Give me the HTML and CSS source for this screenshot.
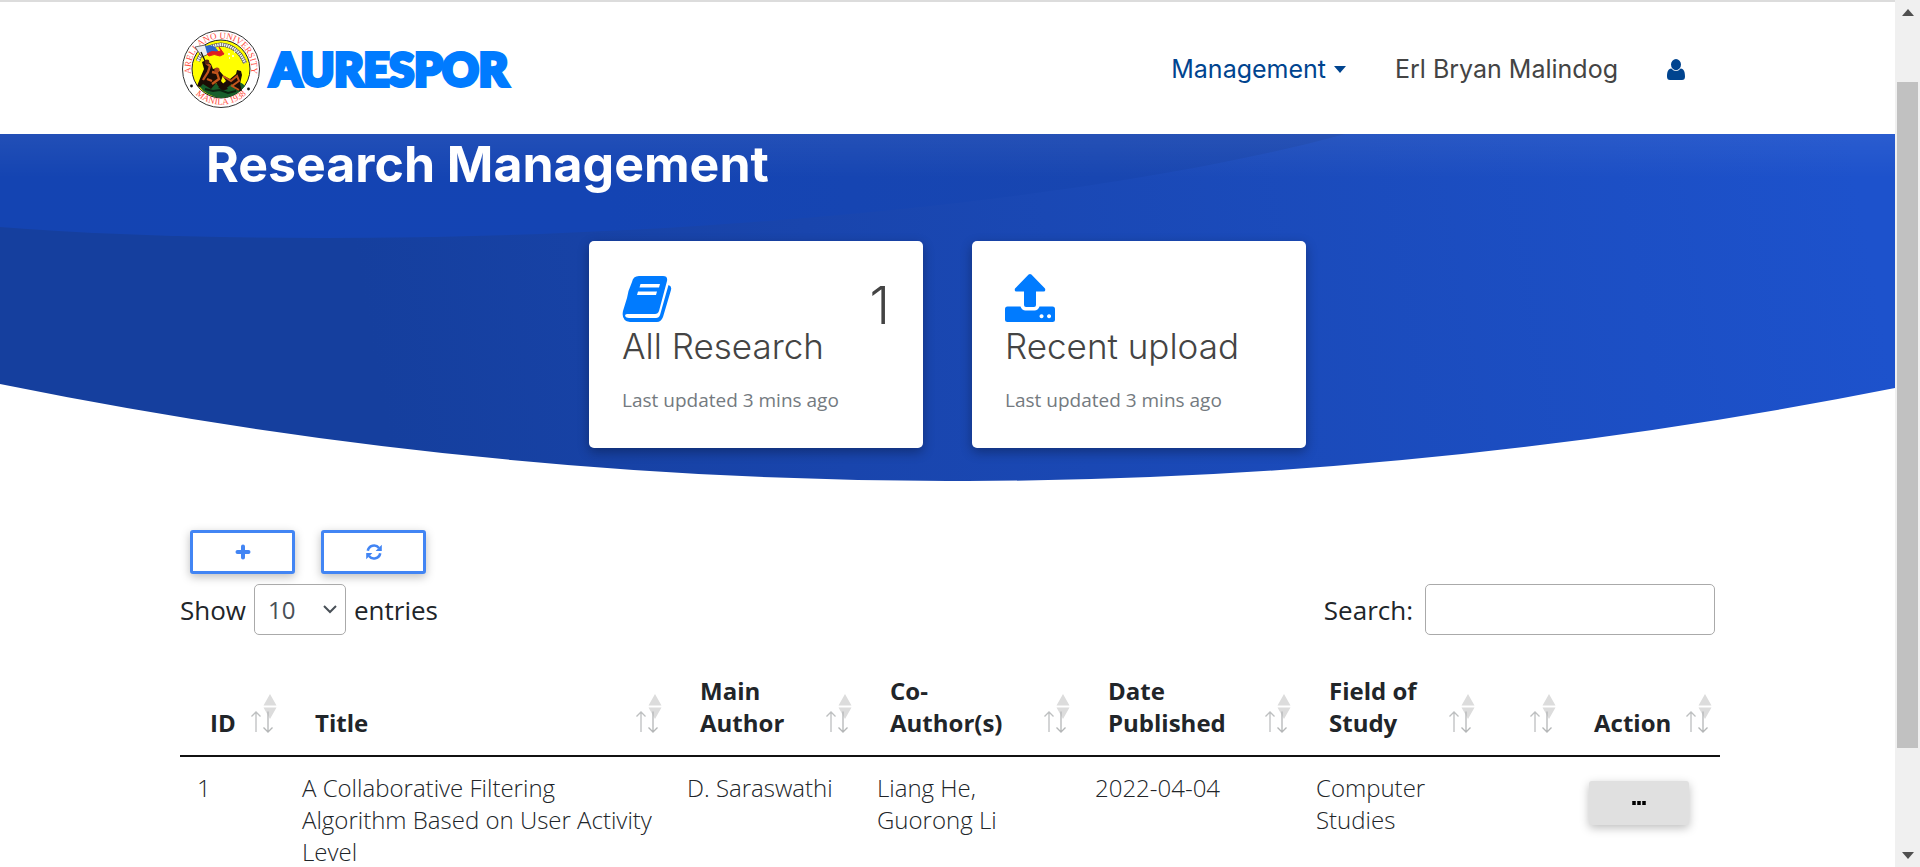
FILE: index.html
```html
<!DOCTYPE html>
<html lang="en">
<head>
<meta charset="utf-8">
<meta name="viewport" content="width=device-width, initial-scale=1">
<title>AURESPOR - Research Management</title>
<link rel="stylesheet" href="styles.css">
</head>
<body>
<svg class="defs" aria-hidden="true">
  <symbol id="sort" viewBox="0 0 34 40">
    <path d="M20.500 11.500L27 0l6.500 11.500z M20.500 13.500h13L27 25z" fill="#dcdcdc"/>
    <path d="M13 38V18M8.500 22.500L13 18l4.500 4.500" fill="none" stroke="#bdbfc0" stroke-width="1.300"/>
    <path d="M25 17.500v20M20.500 33.500L25 38l4.500-4.500" fill="none" stroke="#b4b6b7" stroke-width="1.300"/>
  </symbol>
</svg>
<div class="screen">
  <div class="page">
    <header class="topbar">
      <div class="container topbar-row">
        <a class="brand" href="#">
          <svg class="seal" viewBox="0 0 80 80" role="img" aria-label="Arellano University seal">
            <defs>
              <path id="ringTop" d="M11.500 50.500A30.400 30.400 0 1 1 68.500 50.500"/>
              <path id="ringBottom" d="M7 54A36 36 0 0 0 73 54"/>
            </defs>
            <circle cx="40" cy="40" r="38.500" fill="#fff" stroke="#333" stroke-width="1"/>
            <circle cx="40" cy="40" r="29" fill="#ffff00" stroke="#222" stroke-width="1"/>
            <text class="seal-name"><textPath href="#ringTop" startOffset="50%" text-anchor="middle">ARELLANO UNIVERSITY</textPath></text>
            <text class="seal-name"><textPath href="#ringBottom" startOffset="50%" text-anchor="middle">MANILA 1938</textPath></text>
            <circle cx="10.500" cy="57" r="1.400" fill="#111"/><circle cx="67.500" cy="60" r="1.400" fill="#111"/>
            <path d="M17 32Q22 17 40 15.500Q57 17 64 34" fill="none" stroke="#444" stroke-width="4"/>
            <path d="M17 32Q22 17 40 15.500Q57 17 64 34" fill="none" stroke="#eee" stroke-width="3" stroke-dasharray="1.600 .6"/>
            <path d="M18 57Q28 50 36 55T51 55T64 57Q56 68 40 69Q25 67 18 57Z" fill="#175f2b"/>
            <path d="M14 18l10-2 6 8-9 4z" fill="#e8edf2" stroke="#333" stroke-width=".7"/>
            <path d="M24 17q6-2 10 1l5 6h-13z" fill="#2b63c9"/>
            <path d="M26 25q5-4 9-2l5-1-2-4 5 7-4 2q-6-3-11 0z" fill="#e11e1e" stroke="#e11e1e"/>
            <path d="M20 23l10 22" stroke="#111" stroke-width="1.300"/>
            <path d="M21 33l4-2 5 4 2 5 4-1 6 7-2 6 7 8-6 2-6-8-5 6-8-5-3 3-3-1 4-10 3-7z" fill="#1b0d05"/>
            <path d="M25 34l4 3-2 6-5 8m9-8 5 1 2 6-7 5m-5-5 5 2" fill="none" stroke="#c2561c" stroke-width="2.300"/>
            <circle cx="26" cy="33" r="2.400" fill="#5b2410"/><circle cx="36" cy="41" r="2.600" fill="#a8441a"/>
            <path d="M41 46l8 4 6-5 1-4 4 1 1 4-2 9 2 7-6-1-4-6-7 5-7-1 8-7z" fill="#1b0d05"/>
            <path d="M42 47l8 5 6-5 2 5-7 5 7 4" fill="none" stroke="#c2561c" stroke-width="2"/>
            <path d="M24 60l8 2 7-1 8 3 8-2" fill="none" stroke="#0b2411" stroke-width="2"/>
            <path d="M47 25h2M51 27h2M48 29h1M53 23h1" stroke="#fff" stroke-width="1.600"/>
          </svg>
          <span class="wordmark">AURESPOR</span>
        </a>
        <nav class="nav">
          <a class="nav-link" href="#">Management<span class="caret"></span></a>
          <span class="nav-user">Erl Bryan Malindog</span>
          <a class="nav-link" href="#" aria-label="Account">
            <svg class="user-icon" viewBox="0 0 18 21"><path d="M9 0a5 5.600 0 0 1 0 11.200A5 5.600 0 0 1 9 0zM4.300 9.500Q9 14.500 13.700 9.500C17 10 18 13 18 17.500Q18 21 15 21H3Q0 21 0 17.500C0 13 1 10 4.300 9.500z" fill="#00448f"/></svg>
          </a>
        </nav>
      </div>
    </header>

    <section class="hero">
      <svg class="hero-bg" viewBox="0 0 1895 347" preserveAspectRatio="none" aria-hidden="true">
        <defs>
          <linearGradient id="outer" gradientUnits="userSpaceOnUse" x1="380" y1="260" x2="1850" y2="0">
            <stop offset="0" stop-color="#153f9e"/><stop offset=".3" stop-color="#1945ad"/><stop offset="1" stop-color="#1d52cc"/>
          </linearGradient>
          <linearGradient id="inner" x1="0" y1="0" x2="1" y2="0">
            <stop offset="0" stop-color="#1444b2"/><stop offset=".45" stop-color="#1444b3"/><stop offset="1" stop-color="#1a47b0"/>
          </linearGradient>
          <linearGradient id="sheen" x1="0" y1="0" x2="0" y2="1">
            <stop offset="0" stop-color="#fff" stop-opacity=".06"/><stop offset="1" stop-color="#fff" stop-opacity="0"/>
          </linearGradient>
        </defs>
        <path d="M0 0H1895V254Q947 442 0 250Z" fill="url(#outer)"/>
        <path d="M0 0H1345C1120 62 720 104 324 104Q140 104 0 93Z" fill="url(#inner)"/>
        <rect width="1895" height="44" fill="url(#sheen)"/>
      </svg>
      <div class="container hero-content">
        <h1 class="title">Research Management</h1>
        <div class="cards">
          <article class="card">
            <div class="card-top">
              <svg class="card-icon" viewBox="0 0 50 48"><path d="M17 2H41Q46 2 45 7L37 37Q36 40 33 40H5Q3 40 3 42Q4 44 7 44H34Q37 44 38 41L46.500 11Q50 12 49 16L41 43Q39 48 35 48H8Q-1 47 1 37L5 24L6.500 17L10 8Q11 2 17 2ZM18.500 10L17.500 13.500H37L38 10ZM16 17.500L15 21H34L35 17.500Z" fill="#007bff" fill-rule="evenodd"/></svg>
              <span class="count">1</span>
            </div>
            <h2 class="card-title">All Research</h2>
            <p class="card-note">Last updated 3 mins ago</p>
          </article>
          <article class="card">
            <div class="card-top">
              <svg class="card-icon" viewBox="0 0 50 48"><path d="M23.600.6Q25 -.5 26.400.6L40 14.500Q41 17.500 38.500 17.500H31V31Q31 33 29 33H21Q19 33 19 31V17.500H11.500Q9 17.500 10 14.500ZM2.500 32.500H15.500Q17 36.500 20.500 36.500H29.500Q33 36.500 34.500 32.500H47.500Q50 32.500 50 35V45.500Q50 48 47.500 48H2.500Q0 48 0 45.500V35Q0 32.500 2.500 32.500ZM36.500 40.200a2 2 0 1 0 .1 0ZM44 40.200a2 2 0 1 0 .1 0Z" fill="#007bff" fill-rule="evenodd"/></svg>
            </div>
            <h2 class="card-title">Recent upload</h2>
            <p class="card-note">Last updated 3 mins ago</p>
          </article>
        </div>
      </div>
    </section>

    <main class="container main">
      <div class="actions">
        <button class="btn-outline" type="button" aria-label="Add">
          <svg class="btn-icon" viewBox="0 0 16 16"><path d="M8 2.500v11M2.500 8h11" stroke="#4285f4" stroke-width="4" stroke-linecap="round"/></svg>
        </button>
        <button class="btn-outline" type="button" aria-label="Refresh">
          <svg class="btn-icon" viewBox="0 0 16 16"><path d="M1.800 6.800A6.300 6.300 0 0 1 13 4M14.200 9.200A6.300 6.300 0 0 1 3 12" fill="none" stroke="#4285f4" stroke-width="2.600"/><path d="M15.800.8V7H9.600ZM.2 15.200V9H6.400Z" fill="#4285f4"/></svg>
        </button>
      </div>
      <div class="controls">
        <label class="control">Show
          <select class="length"><option>10</option><option>25</option><option>50</option><option>100</option></select>
          entries</label>
        <label class="control search">Search:<input class="search-input" type="search"></label>
      </div>
      <table class="table">
        <colgroup><col class="c-id"><col class="c-title"><col class="c-main"><col class="c-co"><col class="c-date"><col class="c-field"><col class="c-blank"><col class="c-action"></colgroup>
        <thead>
          <tr>
            <th><div class="head"><span>ID</span><svg class="sort"><use href="#sort"/></svg></div></th>
            <th><div class="head"><span>Title</span><svg class="sort"><use href="#sort"/></svg></div></th>
            <th><div class="head"><span>Main<br>Author</span><svg class="sort"><use href="#sort"/></svg></div></th>
            <th><div class="head"><span>Co-<br>Author(s)</span><svg class="sort"><use href="#sort"/></svg></div></th>
            <th><div class="head"><span>Date<br>Published</span><svg class="sort"><use href="#sort"/></svg></div></th>
            <th><div class="head"><span>Field of<br>Study</span><svg class="sort"><use href="#sort"/></svg></div></th>
            <th><div class="head"><span></span><svg class="sort"><use href="#sort"/></svg></div></th>
            <th><div class="head"><span>Action</span><svg class="sort"><use href="#sort"/></svg></div></th>
          </tr>
        </thead>
        <tbody>
          <tr>
            <td>1</td>
            <td>A Collaborative Filtering Algorithm Based on User Activity Level</td>
            <td>D. Saraswathi</td>
            <td>Liang He, Guorong Li</td>
            <td>2022-04-04</td>
            <td>Computer Studies</td>
            <td></td>
            <td class="cell-action"><button class="btn-more" type="button" aria-label="More actions"><svg class="dots" viewBox="0 0 14 4"><path d="M.5 0h3v4h-3zM5.500 0h3v4h-3zM10.500 0h3v4h-3z" stroke="#000" stroke-width=".5"/></svg></button></td>
          </tr>
        </tbody>
      </table>
    </main>
  </div>
  <div class="scrollbar" aria-hidden="true">
    <span class="arrow arrow-up"></span>
    <span class="track"><span class="thumb"></span></span>
    <span class="arrow arrow-down"></span>
  </div>
</div>
</body>
</html>
```
FILE: styles.css
```css
* { box-sizing: border-box; }

body {
  margin: 0;
  background: #fff;
  color: #212529;
  font-family: "Open Sans", "Noto Sans", sans-serif;
}

.defs { position: absolute; width: 0; height: 0; }

.screen {
  display: grid;
  grid-template-columns: minmax(0, 1fr) 25px;
  height: 100vh;
  overflow: hidden;
}

.page { overflow: hidden; border-top: 2px solid #dcdcdc; }

.container {
  width: 100%;
  max-width: 1545px;
  margin: 0 auto;
  padding-left: 5px;
}

/* Top bar */
.topbar-row {
  display: flex;
  align-items: center;
  justify-content: space-between;
  height: 132px;
  padding-top: 2px;
}

.brand {
  display: flex;
  align-items: center;
  gap: 9px;
  padding-left: 1px;
  color: #007bff;
  text-decoration: none;
}

.seal { width: 80px; height: 80px; }

.seal-name {
  font-family: "Liberation Serif", serif;
  font-size: 9px;
  fill: #ff4a3d;
}

.wordmark {
  font-family: Lato, sans-serif;
  font-size: 45px;
  font-weight: 900;
  line-height: 60px;
  -webkit-text-stroke: 4px #007bff;
}

.nav {
  display: flex;
  align-items: center;
  gap: 49px;
  padding-right: 35px;
  font-family: Inter, sans-serif;
  font-size: 25px;
  line-height: 32px;
}

.nav-link { display: flex; align-items: center; color: #00448f; text-decoration: none; }
.nav-user { color: #444; }

.caret {
  margin-left: 8px;
  border: 6px solid transparent;
  border-top: 7px solid #00448f;
  border-bottom: 0;
}

.user-icon { width: 18px; height: 21px; }

/* Hero */
.hero { position: relative; }

.hero-bg { position: absolute; inset: 0; width: 100%; height: 100%; }

.hero-content { position: relative; padding-bottom: 33px; }

.title {
  margin: 0;
  padding: 0 26px;
  color: #fff;
  font-family: Inter, sans-serif;
  font-size: 50px;
  font-weight: 700;
  line-height: 60px;
}

.cards {
  display: flex;
  justify-content: center;
  gap: 49px;
  margin-top: 47px;
  padding-right: 5px;
}

.card {
  width: 334px;
  padding: 33px;
  border-radius: 5px;
  background: #fff;
  box-shadow: 0 4px 12px rgba(0, 0, 0, .32);
}

.card-top { display: flex; justify-content: space-between; align-items: flex-start; height: 48px; }
.card-icon { width: 50px; height: 48px; }

.count {
  color: #444;
  font-family: Inter, sans-serif;
  font-size: 52px;
  font-weight: 300;
  line-height: 64px;
}

.card-title {
  margin: 0;
  color: #444;
  font-family: Inter, sans-serif;
  font-size: 35px;
  font-weight: 300;
  line-height: 48px;
}

.card-note {
  margin: 16px 0 1px;
  color: #747a80;
  font-size: 19px;
  line-height: 28px;
}

/* Listing */
.main { padding-top: 49px; }

.actions { display: flex; gap: 26px; padding-left: 10px; }

.btn-outline {
  display: flex;
  align-items: center;
  justify-content: center;
  width: 105px;
  height: 44px;
  padding: 0;
  border: 3px solid #4285f4;
  border-radius: 3px;
  background: #fff;
  box-shadow: 0 3px 10px rgba(0, 0, 0, .26);
}

.btn-icon { width: 16px; height: 16px; }

.controls {
  display: flex;
  align-items: center;
  justify-content: space-between;
  margin-top: 10px;
  padding-right: 5px;
}

.control {
  display: flex;
  align-items: center;
  gap: 8px;
  font-size: 26px;
  line-height: 40px;
}

.search { gap: 12px; }

.length {
  width: 92px;
  height: 51px;
  padding: 0 13px;
  border: 1px solid #aaa;
  border-radius: 5px;
  appearance: none;
  background: url("data:image/svg+xml,%3Csvg xmlns='http://www.w3.org/2000/svg' viewBox='0 0 14 9'%3E%3Cpath d='M1 1l6 6 6-6' fill='none' stroke='%23495057' stroke-width='2'/%3E%3C/svg%3E") no-repeat right 8px center / 14px 9px;
  color: #495057;
  font: 400 24px "Open Sans", sans-serif;
}

.search-input {
  width: 290px;
  height: 51px;
  padding: 0 12px;
  border: 1px solid #aaa;
  border-radius: 5px;
  background: #fff;
  font: 400 24px "Open Sans", sans-serif;
}

.table {
  width: 100%;
  margin-top: 28px;
  border-collapse: separate;
  border-spacing: 0;
  table-layout: fixed;
  font-size: 24px;
  line-height: 32px;
}

.c-id { width: 105px; }
.c-main { width: 190px; }
.c-co { width: 218px; }
.c-date { width: 221px; }
.c-field { width: 184px; }
.c-blank { width: 81px; }
.c-action { width: 156px; }

.table th {
  padding: 12px 8px 16px 30px;
  border-bottom: 2px solid #111;
  font-weight: 700;
  text-align: left;
  vertical-align: bottom;
}

.head { display: flex; align-items: flex-end; justify-content: space-between; }
.head span { white-space: nowrap; }
.sort { flex: none; width: 34px; height: 40px; margin-bottom: 5px; }

.table td {
  padding: 15px 17px;
  font-weight: 300;
  vertical-align: top;
}

.table .cell-action { padding: 24px 25px; }

.btn-more {
  display: flex;
  align-items: center;
  justify-content: center;
  width: 100px;
  height: 44px;
  padding: 0;
  border: 0;
  border-radius: 3px;
  background: #e0e0e0;
  box-shadow: 0 3px 10px rgba(0, 0, 0, .26);
}

.dots { width: 14px; height: 4px; }

/* Scroll bar */
.scrollbar {
  display: grid;
  grid-template-rows: 24px minmax(0, 1fr) 24px;
  background: #f0f0f0;
}

.arrow { align-self: center; justify-self: center; border: 6px solid transparent; }
.arrow-up { border-top: 0; border-bottom: 7px solid #505050; }
.arrow-down { border-bottom: 0; border-top: 7px solid #505050; }

.track { display: grid; grid-template-rows: 58fr 666fr 95fr; padding: 0 2px; }
.thumb { grid-row: 2; background: #c1c1c1; }
```
